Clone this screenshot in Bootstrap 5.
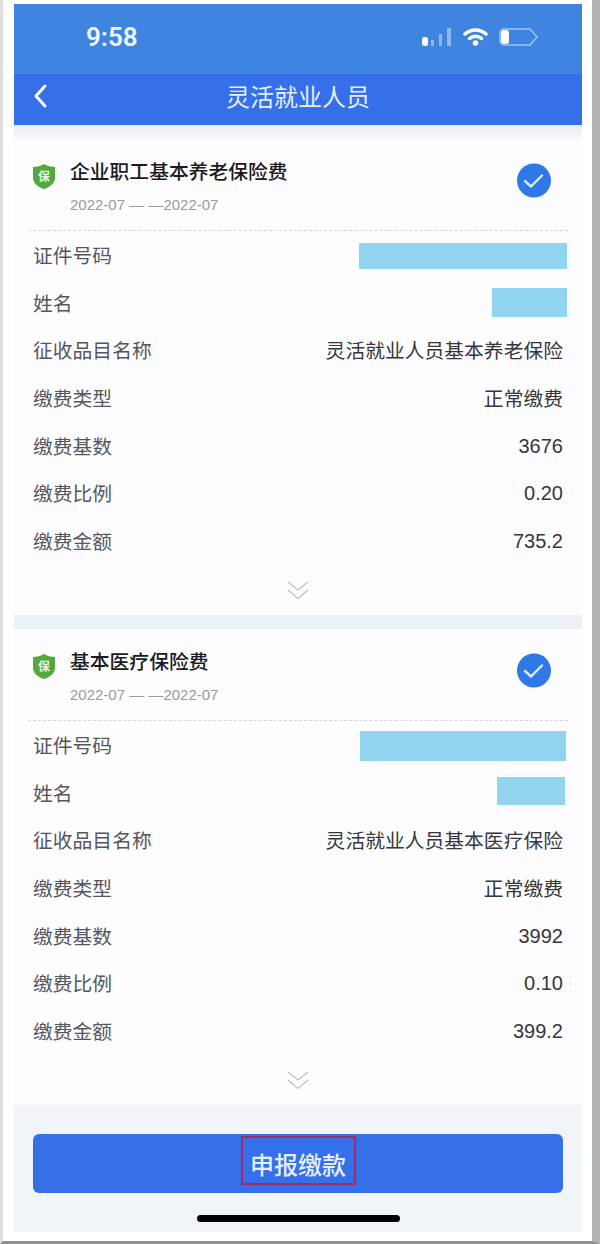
<!DOCTYPE html>
<html lang="zh">
<head>
  <meta charset="utf-8">
  <title>灵活就业人员</title>
  <link href="https://cdn.jsdelivr.net/npm/bootstrap@5.3.2/dist/css/bootstrap.min.css" rel="stylesheet">
  <style>
    html, body { margin: 0; background: #fff; }
    body { font-family: "Noto Sans CJK SC", "Liberation Sans", sans-serif; }
    .frame {
      width: 600px; height: 1244px; overflow: hidden; background: #fff;
      border-left: 3px solid #e2dedc; border-right: 8px solid #b4b1b1; border-bottom: 3px solid #8f8f8f;
      padding: 4px 0 0 11px;
    }
    .phone { width: 568px; height: 1228px; background: #f1f4f9; }
    .status-bar { height: 70px; background: #3f85e0; color: #fff; padding: 0 43px 4px 72px; }
    .status-time { font-family: Roboto, "Liberation Sans", sans-serif; font-weight: 600; font-size: 26px; line-height: 1; color: #f0f5fd; }
    .status-icons { gap: 11px; }
    .title-bar { height: 51px; background: #3570e8; color: #fff; position: relative; padding-bottom: 7px; }
    .title-bar .back { position: absolute; left: 19px; top: 9px; }
    .title-text { font-size: 24px; line-height: 1; color: #e6eefb; }
    .gap-top { height: 14px; background: linear-gradient(#e9ecf1, #f6f7fa); }
    .gap-mid { height: 14px; background: #edf0f7; }
    .fee-card { height: 476px; background: #fdfdff; padding: 0 14px; }
    .fee-head { height: 92px; border-bottom: 1px dashed #d4d6da; padding: 0 17px 0 4px; }
    .fee-title { font-size: 19.800px; line-height: 24px; color: #1c1a20; font-weight: 500; margin-top: 20px; }
    .fee-date { font-family: "Liberation Sans", sans-serif; font-size: 15px; line-height: 18px; color: #9a9a9f; margin-top: 13px; }
    .fee-shield { margin-top: 24px; margin-right: 14px; flex: none; }
    .fee-check { margin-top: 24px; flex: none; }
    .fee-row { height: 47.700px; padding: 0 5px; font-size: 19.800px; color: #55575c; }
    .fee-val { color: #35373b; }
    .fee-num { font-family: "Liberation Sans", sans-serif; font-size: 20px; color: #35373b; }
    .mask { background: #90d4f0; }
    .mask-id-a { width: 208px; height: 26px; margin: 3px -4px 0 0; }
    .mask-name-a { width: 75px; height: 29px; margin: 0 -4px 1px 0; }
    .mask-id-b { width: 206px; height: 30px; margin: 3px -3px 0 0; }
    .mask-name-b { width: 68px; height: 28px; margin: 0 -2px 4px 0; }
    .fee-more { height: 49px; padding-top: 15px; }
    .foot { height: 127px; padding: 29px 19px 0; position: relative; }
    .pay-btn { height: 59px; width: 530px; background: #3570e8; border-radius: 6px; border: 0; padding: 2px 0 0; color: #e6eefb; }
    .pay-label { width: 115px; height: 49px; border: 2px solid #a52a62; font-size: 24px; line-height: 1; padding-top: 14px; font-weight: 500; }
    .home-bar { position: absolute; left: 183px; top: 110px; width: 203px; height: 7px; border-radius: 4px; background: #000; }
  </style>
</head>
<body>

<div class="frame">
  <div class="phone">

    <!-- status bar -->
    <div class="status-bar d-flex align-items-center justify-content-between">
      <div class="status-time">9:58</div>
      <div class="status-icons d-flex align-items-center">
        <svg width="30" height="20" viewBox="0 0 30 20">
          <rect x="0" y="10" width="6" height="9" rx="2.500" fill="#fff"/>
          <rect x="9" y="13" width="3" height="6" fill="#8fb8ec"/>
          <rect x="17" y="7" width="3" height="12" fill="#8fb8ec"/>
          <rect x="25" y="1" width="4" height="18" fill="#8fb8ec"/>
        </svg>
        <svg width="25" height="20" viewBox="0 0 25 20" fill="none" stroke="#fff" stroke-linecap="round">
          <path d="M2 7C8 1.500 17 1.500 23 7" stroke-width="3.500"/>
          <path d="M6.500 11.500C10 8.500 15 8.500 18.500 11.500" stroke-width="3.500"/>
          <circle cx="12.500" cy="16" r="2.800" fill="#fff" stroke="none"/>
        </svg>
        <svg width="40" height="20" viewBox="0 0 40 20" fill="none">
          <path d="M5 2H31L38 10L31 18H5C2.800 18 1 16.200 1 14V6C1 3.800 2.800 2 5 2Z" stroke="#9fc2ee" stroke-width="1.500"/>
          <rect x="2" y="3" width="8" height="14" rx="3" fill="#fff"/>
        </svg>
      </div>
    </div>

    <!-- title bar -->
    <div class="title-bar d-flex align-items-center justify-content-center">
      <svg class="back" width="16" height="26" viewBox="0 0 16 26" fill="none" stroke="#fff" stroke-width="3" stroke-linecap="round" stroke-linejoin="round">
        <path d="M12 3L3 13L12 23"/>
      </svg>
      <div class="title-text">灵活就业人员</div>
    </div>
    <div class="gap-top"></div>

    <div id="cards"></div>

    <!-- footer -->
    <div class="foot">
      <button type="button" class="pay-btn d-flex justify-content-center align-items-start">
        <span class="pay-label">申报缴款</span>
      </button>
      <div class="home-bar"></div>
    </div>
  </div>
</div>

<script src="https://cdn.jsdelivr.net/npm/bootstrap@5.3.2/dist/js/bootstrap.bundle.min.js"></script>
<script>
const fees = [
  { title: "企业职工基本养老保险费", item: "灵活就业人员基本养老保险", base: "3676", rate: "0.20", amount: "735.2", idMask: "mask-id-a", nameMask: "mask-name-a" },
  { title: "基本医疗保险费", item: "灵活就业人员基本医疗保险", base: "3992", rate: "0.10", amount: "399.2", idMask: "mask-id-b", nameMask: "mask-name-b" }
];

function feeRow(label, value) {
  return `<div class="fee-row d-flex align-items-center justify-content-between"><span>${label}</span>${value}</div>`;
}

function feeCard(f) {
  return `
    <div class="fee-card">
      <div class="fee-head d-flex">
        <svg class="fee-shield" width="24" height="27" viewBox="0 0 24 27">
          <path d="M12 1C15 3 19 4 23 4V15C23 20 18 24 12 26C6 24 1 20 1 15V4C5 4 9 3 12 1Z" fill="#52a83f"/>
          <text x="12" y="17.500" text-anchor="middle" font-size="12" font-weight="700" fill="#e4f3df">保</text>
        </svg>
        <div class="flex-grow-1">
          <div class="fee-title">${f.title}</div>
          <div class="fee-date">2022-07 — —2022-07</div>
        </div>
        <svg class="fee-check" width="34" height="35" viewBox="0 0 34 35" fill="none">
          <circle cx="17" cy="17.500" r="17" fill="#2f78e6"/>
          <path d="M8 18L14 23.500L25 12.500" stroke="#dfeafb" stroke-width="2.400" stroke-linecap="round" stroke-linejoin="round"/>
        </svg>
      </div>
      ${feeRow("证件号码", `<div class="mask ${f.idMask}"></div>`)}
      ${feeRow("姓名", `<div class="mask ${f.nameMask}"></div>`)}
      ${feeRow("征收品目名称", `<span class="fee-val">${f.item}</span>`)}
      ${feeRow("缴费类型", '<span class="fee-val">正常缴费</span>')}
      ${feeRow("缴费基数", `<span class="fee-num">${f.base}</span>`)}
      ${feeRow("缴费比例", `<span class="fee-num">${f.rate}</span>`)}
      ${feeRow("缴费金额", `<span class="fee-num">${f.amount}</span>`)}
      <div class="fee-more d-flex justify-content-center">
        <svg width="24" height="22" viewBox="0 0 24 22" fill="none" stroke="#bcbfc5" stroke-width="1.200">
          <path d="M2 2L12 10L22 2"/>
          <path d="M2 10L12 18.500L22 10"/>
        </svg>
      </div>
    </div>`;
}

document.getElementById("cards").innerHTML = fees.map(feeCard).join('<div class="gap-mid"></div>');
</script>

</body>
</html>
